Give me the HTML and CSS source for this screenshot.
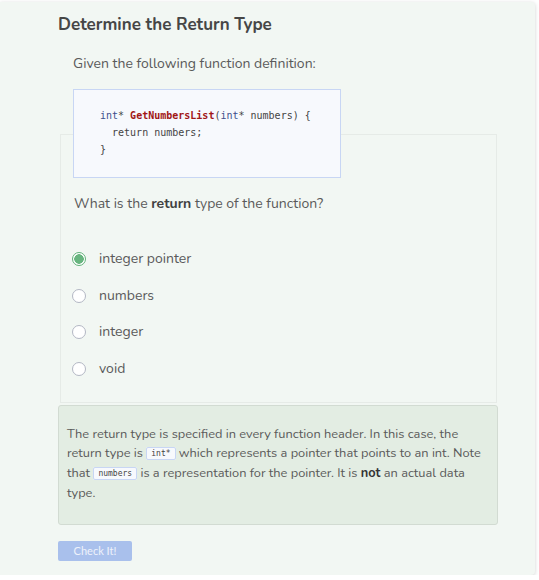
FILE: index.html
```html
<!DOCTYPE html>
<html>
<head>
<meta charset="utf-8">
<link rel="stylesheet" href="styles.css">
</head>
<body>
<div class="card">
  <h1 class="title">Determine the Return Type</h1>
  <p class="intro">Given the following function definition:</p>
  <pre class="code"><span class="kw">int</span>* <span class="fn">GetNumbersList</span>(<span class="kw">int</span>* numbers) {
  return numbers;
}</pre>
  <div class="panel">
    <p class="question">What is the <b>return</b> type of the function?</p>
    <div class="options">
      <label class="option"><span class="radio checked"></span><span>integer pointer</span></label>
      <label class="option"><span class="radio"></span><span>numbers</span></label>
      <label class="option"><span class="radio"></span><span>integer</span></label>
      <label class="option"><span class="radio"></span><span>void</span></label>
    </div>
  </div>
  <div class="feedback">The return type is specified in every function header. In this case, the return type is <code class="inline">int*</code> which represents a pointer that points to an int. Note that <code class="inline">numbers</code> is a representation for the pointer. It is <b>not</b> an actual data type.</div>
  <button class="check">Check It!</button>
</div>
</body>
</html>
```
FILE: styles.css
```css
html, body {
  margin: 0;
  padding: 0;
  background: #ffffff;
}
body {
  font-family: "Nunito", "Lato", "Open Sans", sans-serif;
  color: #5a5a5a;
}
.card {
  width: 440px;
  margin: 2px 0 0 0;
  padding: 11px 37px 14px 58px;
  background: #f2f7f3;
  border-radius: 0 4px 4px 0;
  box-shadow: 0 1px 4px rgba(0, 0, 0, 0.18);
  display: flex;
  flex-direction: column;
}
.title {
  margin: 0;
  font-size: 17px;
  line-height: 24px;
  font-weight: 700;
  color: #464646;
}
.intro {
  margin: 17px 0 0 15px;
  font-size: 14px;
  line-height: 20px;
}
.code {
  position: relative;
  z-index: 1;
  align-self: flex-start;
  width: 240px;
  margin: 15px 0 -44px 15px;
  padding: 17px 0 19px 26px;
  background: #f7f9fd;
  border: 1px solid #c8d6f4;
  font-family: "DejaVu Sans Mono", monospace;
  font-size: 10px;
  line-height: 17px;
  color: #444;
}
.kw { color: #3d4f8c; }
.fn { color: #a11616; font-weight: 700; }
.panel {
  margin: 0 1px 0 2px;
  border: 1px solid #e6ebe7;
  padding: 59px 13px 23px 13px;
}
.question {
  margin: 0;
  font-size: 14px;
  line-height: 20px;
}
.question b { color: #404040; }
.options {
  display: flex;
  flex-direction: column;
  gap: 16.6px;
  margin-top: 35px;
}
.option {
  display: flex;
  align-items: center;
  gap: 13px;
  font-size: 14px;
  line-height: 20px;
  margin-left: -2px;
}
.radio {
  box-sizing: border-box;
  width: 14px;
  height: 14px;
  border-radius: 50%;
  border: 1px solid #b3b7c4;
  background: #fff;
  flex: none;
}
.radio.checked {
  border-color: #62b27a;
  background: radial-gradient(circle, #68b57f 0 4.5px, #fff 5px);
}
.feedback {
  margin-top: 2px;
  padding: 19px 3px 20px 8px;
  background: #e3ede3;
  border: 1px solid #d2dbd2;
  border-radius: 3px;
  font-size: 12.8px;
  line-height: 19.7px;
  color: #5a5a5a;
}
.feedback b { color: #333; }
.inline {
  font-family: "DejaVu Sans Mono", monospace;
  font-size: 8px;
  line-height: 1;
  vertical-align: 1px;
  padding: 1px 4px;
  background: #f7f9fd;
  border: 1px solid #c8d6f4;
  border-radius: 2px;
  color: #444;
}
.check {
  align-self: flex-start;
  margin-top: 16px;
  width: 74px;
  height: 20px;
  padding: 0;
  border: none;
  border-radius: 2px;
  background: #a9c0ec;
  color: #eef2fb;
  font-family: "Lato", sans-serif;
  font-size: 11px;
}
```
